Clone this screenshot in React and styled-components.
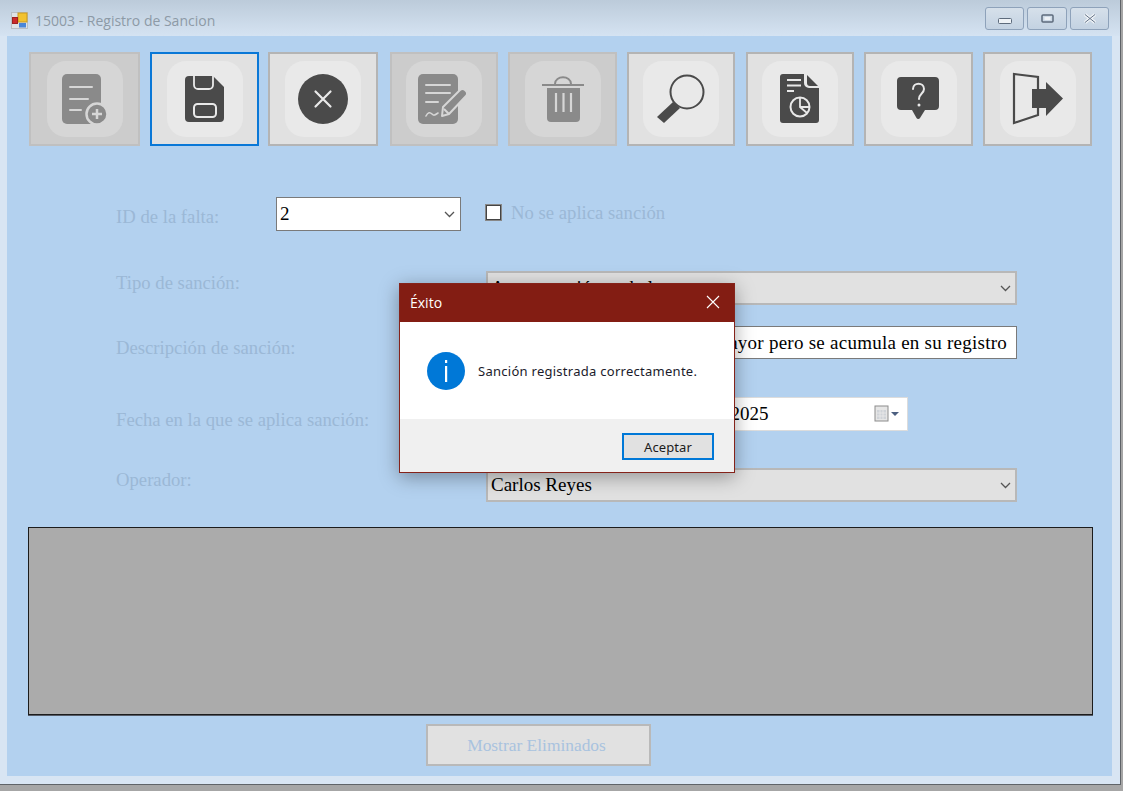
import React from 'react';
import styled, { createGlobalStyle } from 'styled-components';

const GlobalStyle = createGlobalStyle`
  html, body {
    margin: 0;
    height: 791px;
    overflow: hidden;
    background: #a6a6a6;
  }
  * { box-sizing: border-box; }
`;

const Window = styled.div`
  position: relative;
  width: 1121px;
  height: 785px;
  display: flex;
  flex-direction: column;
  background: #d8e5f3;
  border-right: 1px solid #5f6368;
  border-bottom: 1px solid #5f6368;
`;

const TitleBar = styled.div`
  height: 36px;
  flex: none;
  display: flex;
  align-items: center;
  gap: 7px;
  padding: 4px 11px 0 11px;
  background: linear-gradient(#bccbda, #d5e3f2);
`;

const Title = styled.span`
  margin-top: 1px;
  font: 14px "Open Sans", "Noto Sans", sans-serif;
  color: #8d9aa6;
`;

const WindowButtons = styled.div`
  margin-left: auto;
  margin-top: -3px;
  display: flex;
  gap: 3px;
`;

const WindowButton = styled.div`
  width: ${p => p.$w || 39}px;
  height: 23px;
  display: flex;
  align-items: center;
  justify-content: center;
  padding-top: ${p => p.$drop || 0}px;
  border: 1px solid #8ea2ba;
  border-radius: 3px;
  background: linear-gradient(#d6e0ea, #c3d2e2);
`;

const Client = styled.div`
  flex: none;
  height: 740px;
  margin: 0 8px 0 7px;
  padding: 16px 20px 0 22px;
  background: #b3d1ef;
`;

const Toolbar = styled.div`
  display: flex;
`;

const ToolButton = styled.button`
  flex: none;
  width: ${p => p.$w}px;
  height: 94px;
  margin-left: ${p => p.$ml}px;
  padding: 0;
  display: flex;
  align-items: center;
  justify-content: center;
  background: ${p => (p.$off ? '#cccccc' : '#e1e1e1')};
  border: ${p => (p.$active ? '2px solid #0a78d7' : p.$off ? '2px solid #c0c0c0' : '2px solid #b4b4b4')};
`;

const Row = styled.div`
  display: grid;
  grid-template-columns: ${p => p.$cols || '370px 531px'};
  height: ${p => p.$h}px;
  margin-top: ${p => p.$mt}px;
  padding-left: 87px;
`;

const Label = styled.label`
  align-self: start;
  margin-top: ${p => p.$top}px;
  font: 18.7px/22px "Liberation Serif", serif;
  color: #9bb8d6;
  white-space: nowrap;
`;

const Combo = styled.div`
  display: flex;
  align-items: center;
  justify-content: space-between;
  padding: ${p => (p.$white ? '0 5px 0 3px' : '0 4px 0 3px')};
  background: ${p => (p.$white ? '#ffffff' : '#e1e1e1')};
  border: ${p => (p.$white ? '1px solid #7a7a7a' : '2px solid #b8b8b8')};
  font: 19px "Liberation Serif", serif;
  color: #000000;
  white-space: nowrap;
  overflow: hidden;
`;

const CheckRow = styled.div`
  display: flex;
  align-items: flex-start;
  gap: 10px;
  padding: 8px 0 0 25px;
`;

const CheckBox = styled.span`
  width: 15px;
  height: 15px;
  flex: none;
  background: #ffffff;
  border: 1px solid #444444;
  outline: 0.5px solid #888888;
`;

const TextField = styled.div`
  display: flex;
  justify-content: flex-end;
  align-items: center;
  padding: 0 9px;
  background: #ffffff;
  border: 1px solid #7a7a7a;
  font: 19px "Liberation Serif", serif;
  letter-spacing: 0.25px;
  color: #000000;
  white-space: nowrap;
  overflow: hidden;
`;

const DateField = styled.div`
  width: 422px;
  display: flex;
  align-items: center;
  justify-content: space-between;
  padding: 0 7px 1px 5px;
  background: #ffffff;
  border: 1px solid #dcdcdc;
  font: 19px "Liberation Serif", serif;
  color: #000000;
  white-space: nowrap;
`;

const DataGrid = styled.div`
  width: 1065px;
  height: 188px;
  margin: 25px 0 0 -1px;
  background: #ababab;
  border: 1px solid #1c1c1c;
  box-shadow: 0 1px 0 #555b66;
`;

const ShowDeleted = styled.button`
  display: block;
  width: 225px;
  height: 42px;
  margin: 9px 0 0 397px;
  padding: 0 10px 0 6px;
  background: #e1e1e1;
  border: 2px solid #b9b9b9;
  font: 17.4px "Liberation Serif", serif;
  color: #a9c3df;
`;

const Dialog = styled.div`
  position: absolute;
  left: 399px;
  top: 283px;
  width: 336px;
  height: 190px;
  display: flex;
  flex-direction: column;
  background: #ffffff;
  border: 1px solid #85231a;
  box-shadow: 0 4px 18px rgba(0, 0, 0, 0.35);
`;

const DialogHead = styled.div`
  height: 38px;
  flex: none;
  display: flex;
  align-items: center;
  justify-content: space-between;
  padding: 0 14px 2px 10px;
  background: #831d13;
  font: 14px "Open Sans", "Noto Sans", sans-serif;
  color: #ffffff;
`;

const DialogBody = styled.div`
  flex: 1;
  display: flex;
  align-items: center;
  gap: 13px;
  padding: 1px 0 0 27px;
  font: 13px "Noto Sans", sans-serif;
  letter-spacing: 0.27px;
  color: #1b1b2b;
`;

const DialogFoot = styled.div`
  height: 53px;
  flex: none;
  display: flex;
  align-items: flex-start;
  justify-content: flex-end;
  padding: 14px 20px 0 0;
  background: #f0f0f0;
`;

const AcceptButton = styled.button`
  width: 92px;
  height: 27px;
  padding: 0;
  background: #e1e1e1;
  border: 2px solid #0078d7;
  font: 13px "Noto Sans", sans-serif;
  letter-spacing: 0.1px;
  color: #1b1b1b;
`;

const Tile = ({ bg, children }) => (
  <svg width="76" height="76" viewBox="0 0 76 76" fill="none">
    <rect x="0" y="0" width="76" height="76" rx="19" fill={bg} />
    {children}
  </svg>
);

const NewIcon = ({ fg, bg }) => (
  <Tile bg={bg}>
    <rect x="15" y="13" width="39" height="50" rx="5" fill={fg} />
    <path d="M23 26h22M23 38h18M23 49h11" stroke={bg} strokeWidth="2" strokeLinecap="round" />
    <circle cx="50" cy="53" r="10.5" fill={fg} stroke={bg} strokeWidth="2.5" />
    <path d="M45 53h10M50 48v10" stroke={bg} strokeWidth="2.5" />
  </Tile>
);

const SaveIcon = ({ fg, bg }) => (
  <Tile bg={bg}>
    <path d="M22 15h24l11 11v31a4 4 0 0 1-4 4H22a4 4 0 0 1-4-4V19a4 4 0 0 1 4-4z" fill={fg} />
    <path d="M27 15v9a4 4 0 0 0 4 4h11a4 4 0 0 0 4-4v-9" stroke={bg} strokeWidth="1.8" />
    <rect x="27" y="43" width="22" height="13" rx="3.5" stroke={bg} strokeWidth="2" />
  </Tile>
);

const CancelIcon = ({ fg, bg }) => (
  <Tile bg={bg}>
    <circle cx="38" cy="38" r="25" fill={fg} />
    <path d="M30.5 30.5l15 15M45.5 30.5l-15 15" stroke={bg} strokeWidth="2.2" strokeLinecap="round" />
  </Tile>
);

const EditIcon = ({ fg, bg }) => (
  <Tile bg={bg}>
    <rect x="12" y="13" width="40" height="50" rx="5" fill={fg} />
    <path d="M20 24h24M20 32h24M20 41h12" stroke={bg} strokeWidth="2" strokeLinecap="round" />
    <path d="M20 55c2-4 4-4 6-2s3 1 6-1" stroke={bg} strokeWidth="1.6" strokeLinecap="round" />
    <path d="M36 55l1-9 17-17a3.5 3.5 0 0 1 5 0l1 1a3.5 3.5 0 0 1 0 5L43 53z" fill={fg} stroke={bg} strokeWidth="2" strokeLinejoin="round" />
    <path d="M38 48l5 5" stroke={bg} strokeWidth="2" />
  </Tile>
);

const TrashIcon = ({ fg, bg }) => (
  <Tile bg={bg}>
    <path d="M17 24h42" stroke={fg} strokeWidth="2.2" />
    <path d="M30 23c0-9 16-9 16 0" stroke={fg} strokeWidth="2" />
    <path d="M22 27h33v30a4 4 0 0 1-4 4H26a4 4 0 0 1-4-4z" fill={fg} />
    <path d="M31 32v19M38.500 32v19M46 32v19" stroke={bg} strokeWidth="2.2" />
  </Tile>
);

const SearchIcon = ({ fg, bg }) => (
  <Tile bg={bg}>
    <path d="M30 41L14 56l7 6 16-15z" fill={fg} />
    <circle cx="44" cy="31" r="16.500" fill={bg} stroke={fg} strokeWidth="2" />
  </Tile>
);

const ReportIcon = ({ fg, bg }) => (
  <Tile bg={bg}>
    <path d="M21 13h21v9a5 5 0 0 0 5 5h10v32a3 3 0 0 1-3 3H21a3 3 0 0 1-3-3V16a3 3 0 0 1 3-3z" fill={fg} />
    <path d="M45 14l11 11h-8a3 3 0 0 1-3-3z" fill={fg} />
    <path d="M25 19h14M25 24.500h14M25 30h7" stroke={bg} strokeWidth="1.8" />
    <circle cx="38" cy="46" r="9.500" stroke={bg} strokeWidth="2" />
    <path d="M38 37v9l7 6M38 46h9" stroke={bg} strokeWidth="1.8" />
  </Tile>
);

const HelpIcon = ({ fg, bg }) => (
  <Tile bg={bg}>
    <path d="M20 16h34a4 4 0 0 1 4 4v25a4 4 0 0 1-4 4H44l-5 8a2 2 0 0 1-3.500 0L31 49H20a4 4 0 0 1-4-4V20a4 4 0 0 1 4-4z" fill={fg} />
    <path d="M32 28c0-7 11-7 11 0 0 4.500-5 4.500-5 10" stroke={bg} strokeWidth="2" strokeLinecap="round" />
    <circle cx="38" cy="44" r="1.500" fill={bg} />
  </Tile>
);

const ExitIcon = ({ fg, bg }) => (
  <Tile bg={bg}>
    <path d="M38 28V16L14 13v49l24-8v-7" stroke={fg} strokeWidth="2.2" />
    <path d="M32 28h14v-7l17 16.500L46 55v-8H32z" fill={fg} />
  </Tile>
);

const Chevron = () => (
  <svg width="11" height="7" viewBox="0 0 11 7" fill="none">
    <path d="M1 1l4.500 4.500L10 1" stroke="#555555" strokeWidth="1.300" />
  </svg>
);

const AppIcon = () => (
  <svg width="17" height="17" viewBox="0 0 17 17">
    <rect x="0.500" y="0.500" width="16" height="16" fill="#dfe3e6" stroke="#b9bec4" />
    <rect x="7" y="1" width="9" height="9" fill="#f2c230" stroke="#c99a20" />
    <rect x="1.500" y="5.500" width="5" height="6" fill="#cc2a2a" stroke="#9d2222" />
    <rect x="8" y="11" width="7" height="4.500" fill="#4a86d8" />
  </svg>
);

const CalendarIcon = () => (
  <svg width="27" height="18" viewBox="0 0 27 18" fill="none">
    <rect x="2" y="1" width="13" height="15" fill="#e6e6e6" stroke="#8c8c8c" />
    <path d="M4 5h9v9H4z" fill="#cfd3d8" />
    <path d="M7 5v9M10 5v9M4 8h9M4 11h9" stroke="#eeeeee" strokeWidth="0.700" />
    <path d="M18 7h8l-4 4z" fill="#4c5f80" />
  </svg>
);

const toolButtons = [
  { key: 'new', w: 111, ml: 0, off: true, Icon: NewIcon },
  { key: 'save', w: 109, ml: 10, active: true, Icon: SaveIcon },
  { key: 'cancel', w: 110, ml: 9, Icon: CancelIcon },
  { key: 'edit', w: 108, ml: 12, off: true, Icon: EditIcon },
  { key: 'delete', w: 109, ml: 10, off: true, Icon: TrashIcon },
  { key: 'search', w: 108, ml: 10, Icon: SearchIcon },
  { key: 'report', w: 108, ml: 11, Icon: ReportIcon },
  { key: 'help', w: 109, ml: 10, Icon: HelpIcon },
  { key: 'exit', w: 109, ml: 10, Icon: ExitIcon },
];

export default function App() {
  return (
    <>
      <GlobalStyle />
      <Window>
        <TitleBar>
          <AppIcon />
          <Title>15003 - Registro de Sancion</Title>
          <WindowButtons>
            <WindowButton $drop={4}>
              <svg width="14" height="6" viewBox="0 0 14 6"><rect x="0.500" y="0.500" width="13" height="5" rx="1" fill="#eef2f6" stroke="#5d6b7c" /></svg>
            </WindowButton>
            <WindowButton $w={40}>
              <svg width="13" height="9" viewBox="0 0 13 9" fill="none"><rect x="1" y="1" width="11" height="7" rx="1" stroke="#5d6b7c" strokeWidth="1.500" /><rect x="3.500" y="3" width="6" height="3" fill="#eef2f6" /></svg>
            </WindowButton>
            <WindowButton>
              <svg width="14" height="11" viewBox="0 0 14 11" fill="none"><path d="M2 1.500l10 8M12 1.500l-10 8" stroke="#eef2f6" strokeWidth="3.500" /><path d="M2 1.500l10 8M12 1.500l-10 8" stroke="#66758a" strokeWidth="1" /></svg>
            </WindowButton>
          </WindowButtons>
        </TitleBar>

        <Client>
          <Toolbar>
            {toolButtons.map(({ key, w, ml, off, active, Icon }) => (
              <ToolButton key={key} $w={w} $ml={ml} $off={off} $active={active}>
                <Icon fg={off ? '#8a8a8a' : '#4a4a4a'} bg={off ? '#d6d6d6' : '#e9e9e9'} />
              </ToolButton>
            ))}
          </Toolbar>

          <Row $mt={51} $h={34} $cols="160px 185px 1fr">
            <Label $top={9}>ID de la falta:</Label>
            <Combo $white>2<Chevron /></Combo>
            <CheckRow>
              <CheckBox />
              <Label $top={-3}>No se aplica sanción</Label>
            </CheckRow>
          </Row>

          <Row $mt={40} $h={34}>
            <Label $top={1}>Tipo de sanción:</Label>
            <Combo>Amonestación verbal<Chevron /></Combo>
          </Row>

          <Row $mt={21} $h={32}>
            <Label $top={11}>Descripción de sanción:</Label>
            <TextField>La falta no es mayor pero se acumula en su registro</TextField>
          </Row>

          <Row $mt={39} $h={32}>
            <Label $top={12}>Fecha en la que se aplica sanción:</Label>
            <DateField>miércoles, 12 de noviembre de 2025<CalendarIcon /></DateField>
          </Row>

          <Row $mt={39} $h={34}>
            <Label $top={1}>Operador:</Label>
            <Combo>Carlos Reyes<Chevron /></Combo>
          </Row>

          <DataGrid />
          <ShowDeleted disabled>Mostrar Eliminados</ShowDeleted>
        </Client>

        <Dialog>
          <DialogHead>
            Éxito
            <svg width="14" height="14" viewBox="0 0 14 14" fill="none"><path d="M1 1l12 12M13 1L1 13" stroke="#ffffff" strokeWidth="1.100" /></svg>
          </DialogHead>
          <DialogBody>
            <svg width="38" height="38" viewBox="0 0 38 38">
              <circle cx="19" cy="19" r="19" fill="#0078d7" />
              <rect x="18" y="8" width="2.200" height="3" fill="#ffffff" />
              <rect x="18" y="14" width="2.200" height="16" fill="#ffffff" />
            </svg>
            Sanción registrada correctamente.
          </DialogBody>
          <DialogFoot>
            <AcceptButton>Aceptar</AcceptButton>
          </DialogFoot>
        </Dialog>
      </Window>
    </>
  );
}
